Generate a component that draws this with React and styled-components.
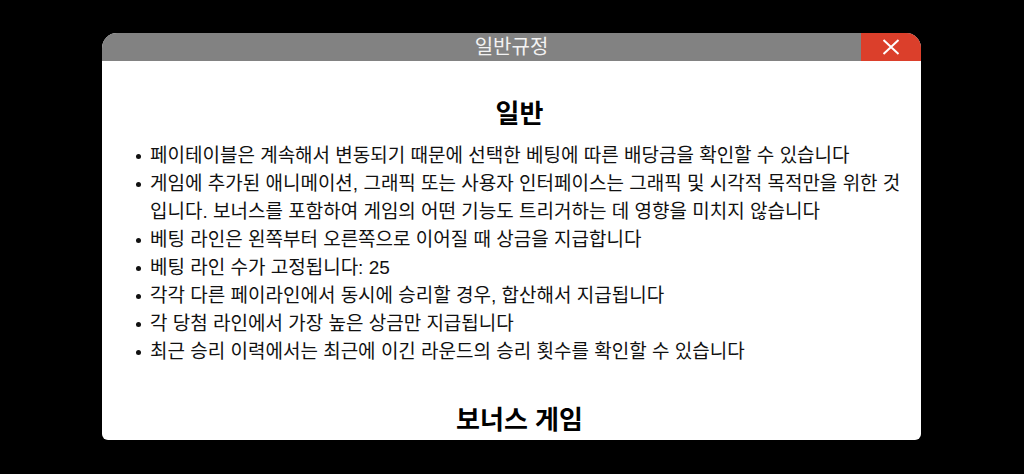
import React from "react";
import styled, { createGlobalStyle } from "styled-components";

const Global = createGlobalStyle`
  html, body { margin: 0; padding: 0; background: #000; }
  body { width: 1024px; height: 474px; overflow: hidden; font-family: "Liberation Sans", "Noto Sans CJK KR", sans-serif; }
`;

const Page = styled.div`
  width: 1024px;
  height: 474px;
  background: #000;
  display: flex;
  justify-content: flex-start;
  padding: 33px 0 0 102px;
  box-sizing: border-box;
`;

const Modal = styled.div`
  width: 819px;
  height: 407px;
  display: flex;
  flex-direction: column;
  border-radius: 15px 15px 6px 6px;
  overflow: hidden;
  background: #fff;
`;

const Header = styled.div`
  position: relative;
  height: 28px;
  flex: none;
  background: #828282;
  display: flex;
  align-items: center;
  justify-content: center;
`;

const Title = styled.div`
  color: #f2f2f2;
  font-size: 20px;
  line-height: 28px;
`;

const Close = styled.button`
  position: absolute;
  top: 0;
  right: 0;
  width: 60px;
  height: 28px;
  border: 0;
  padding: 0;
  background: #db3f2b;
  display: flex;
  align-items: center;
  justify-content: center;
`;

const Body = styled.div`
  flex: 1;
  overflow: hidden;
  padding: 38px 18px 0 34px;
  color: #111;
`;

const Heading = styled.h2`
  margin: 0;
  text-align: center;
  font-size: 26px;
  line-height: 30px;
  font-weight: 700;
  color: #000;
`;

const List = styled.ul`
  list-style: none;
  margin: 13px 0 39px;
  padding: 0;
`;

const Item = styled.li`
  position: relative;
  padding-left: 14px;
  font-size: 19px;
  line-height: 28px;
  &::before {
    content: "";
    position: absolute;
    left: 0;
    top: 12px;
    width: 5px;
    height: 5px;
    border-radius: 50%;
    background: #111;
  }
`;

const items = [
  "페이테이블은 계속해서 변동되기 때문에 선택한 베팅에 따른 배당금을 확인할 수 있습니다",
  "게임에 추가된 애니메이션, 그래픽 또는 사용자 인터페이스는 그래픽 및 시각적 목적만을 위한 것 입니다. 보너스를 포함하여 게임의 어떤 기능도 트리거하는 데 영향을 미치지 않습니다",
  "베팅 라인은 왼쪽부터 오른쪽으로 이어질 때 상금을 지급합니다",
  "베팅 라인 수가 고정됩니다: 25",
  "각각 다른 페이라인에서 동시에 승리할 경우, 합산해서 지급됩니다",
  "각 당첨 라인에서 가장 높은 상금만 지급됩니다",
  "최근 승리 이력에서는 최근에 이긴 라운드의 승리 횟수를 확인할 수 있습니다",
];

export default function App() {
  return (
    <>
      <Global />
      <Page>
        <Modal>
          <Header>
            <Title>일반규정</Title>
            <Close aria-label="close">
              <svg width="18" height="16" viewBox="0 0 18 16">
                <path d="M1.5 1 L16.5 15 M16.5 1 L1.5 15" stroke="#fff" strokeWidth="2" fill="none" />
              </svg>
            </Close>
          </Header>
          <Body>
            <Heading>일반</Heading>
            <List>
              {items.map((t, i) => (
                <Item key={i}>{t}</Item>
              ))}
            </List>
            <Heading>보너스 게임</Heading>
          </Body>
        </Modal>
      </Page>
    </>
  );
}
